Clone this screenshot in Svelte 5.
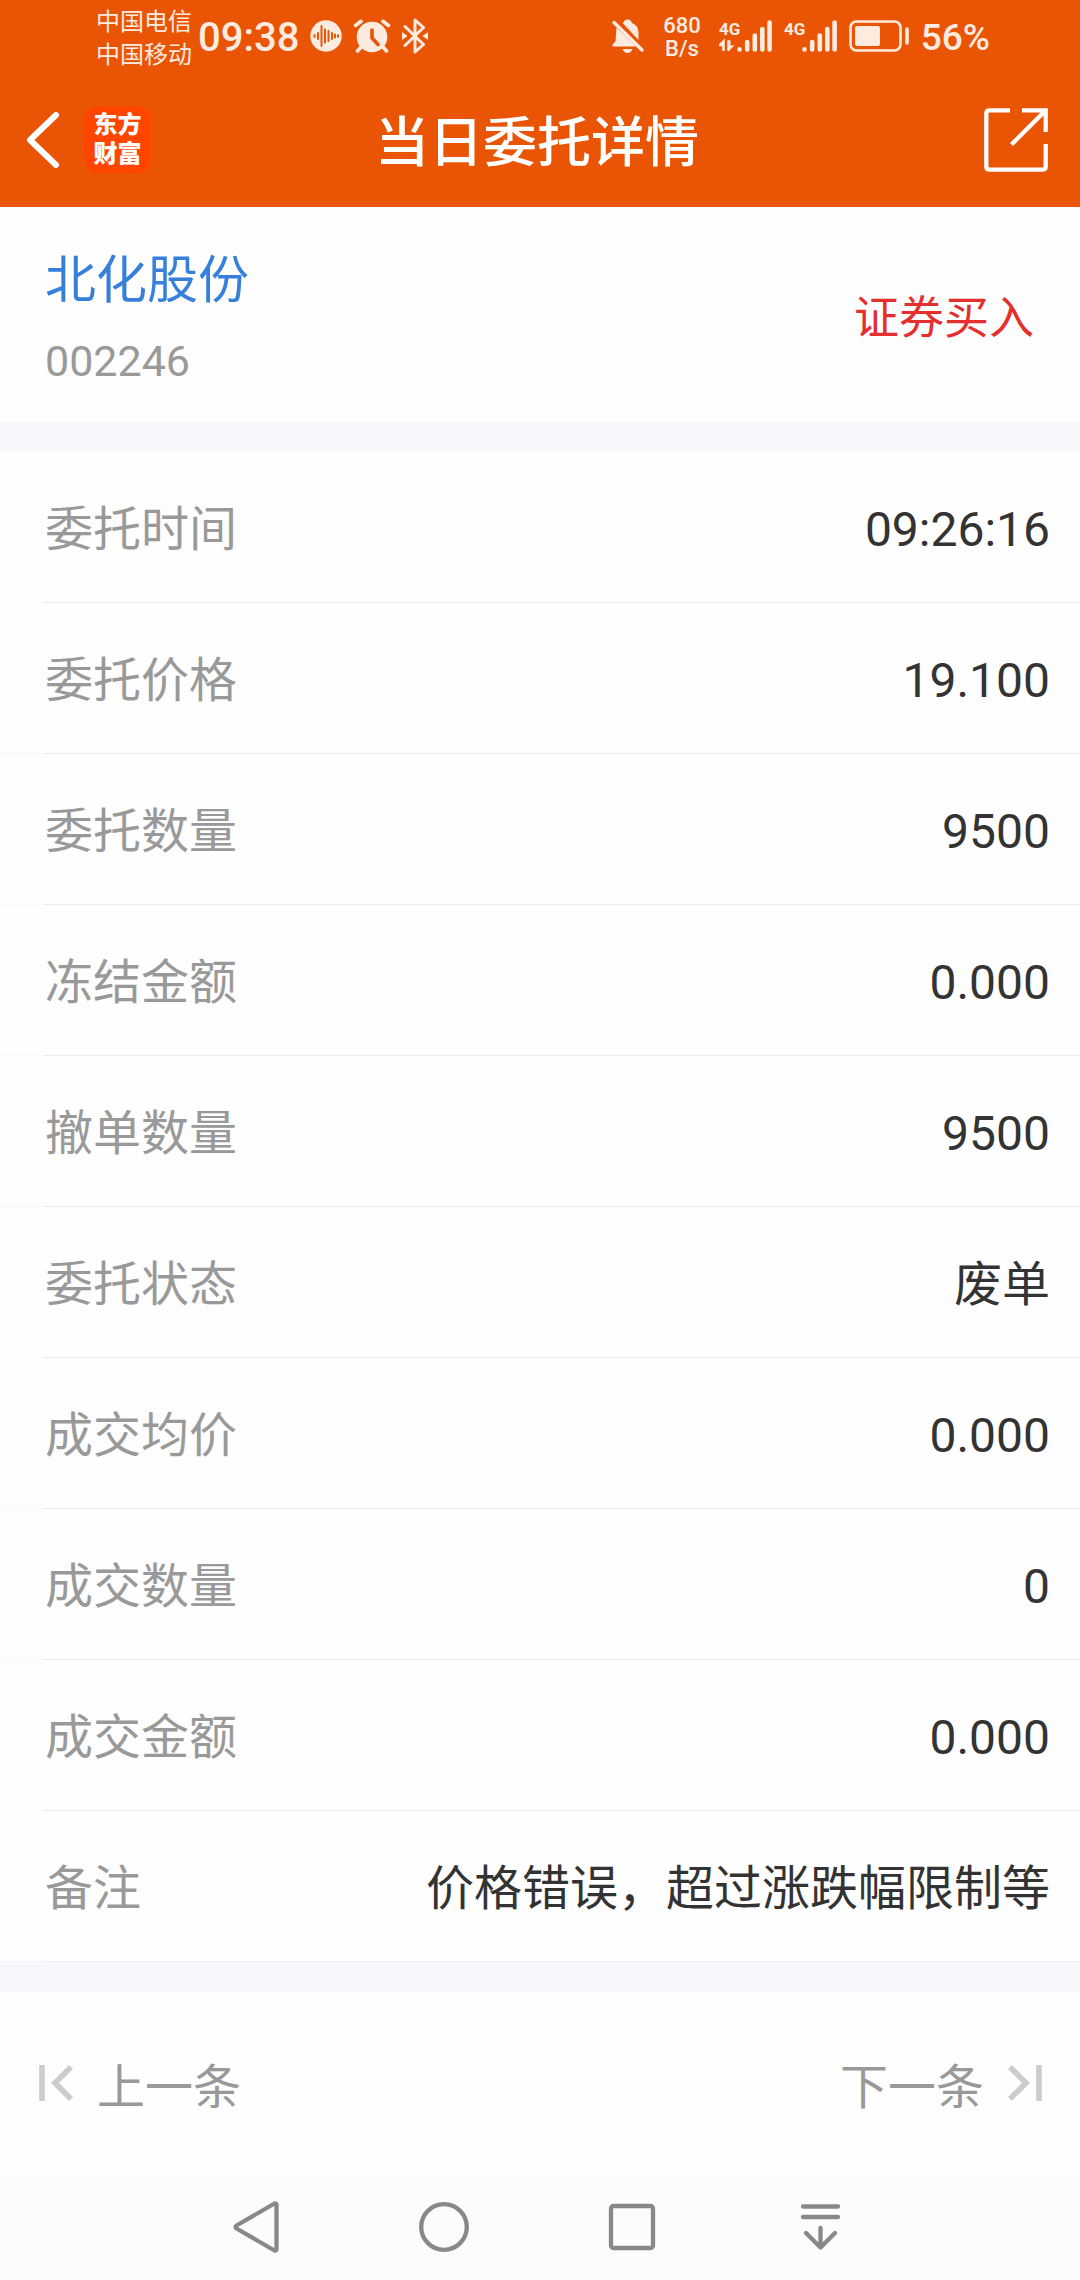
<script lang="ts">
  const rows = [
    { label: '委托时间', value: '09:26:16' },
    { label: '委托价格', value: '19.100' },
    { label: '委托数量', value: '9500' },
    { label: '冻结金额', value: '0.000' },
    { label: '撤单数量', value: '9500' },
    { label: '委托状态', value: '废单' },
    { label: '成交均价', value: '0.000' },
    { label: '成交数量', value: '0' },
    { label: '成交金额', value: '0.000' },
    { label: '备注', value: '价格错误，超过涨跌幅限制等' },
  ];
</script>

{#snippet signal(data: boolean)}
  <svg width="53" height="36" viewBox="0 0 53 36" aria-hidden="true">
    <text class="net-type" x="0" y="17">4G</text>
    {#if data}
      <path d="M4.500 33V23.500L1 27H4.500M9.500 22.500V33" fill="none" stroke="currentColor" stroke-width="2.500" />
      <path d="M9 22.500v11l6.500-6h-4v-5z" fill="currentColor" />
    {/if}
    <g stroke="currentColor" stroke-width="4.600" stroke-linecap="round">
      <path d="M20.500 31.200v.300M28.200 24v7.500M35.800 17.500v14M43.300 11v20.500M50.600 4.500v27" />
    </g>
  </svg>
{/snippet}

<div class="page">
  <header class="top">
    <div class="status">
      <div class="carriers"><span>中国电信</span><span>中国移动</span></div>
      <span class="clock">09:38</span>
      <svg width="32" height="32" viewBox="0 0 32 32" aria-hidden="true">
        <circle cx="16" cy="16" r="15.700" fill="currentColor" />
        <path class="cut" d="M4.500 15v2M8 13v6M11.500 6v20M15 9.500v13M18.500 11v10M22 13v6M25 14.500v3M28 15.200v1.600" />
      </svg>
      <svg width="38" height="34" viewBox="0 0 38 34" aria-hidden="true">
        <circle cx="19" cy="18" r="15.300" fill="currentColor" />
        <path d="M2.500 6.500L8 2.300M35.500 6.500L30 2.300M8 28l-3.500 4M30 28l3.500 4" fill="none" stroke="currentColor" stroke-width="3.600" stroke-linecap="round" />
        <path d="M19 11v8l6 6.500" fill="none" class="hand" />
      </svg>
      <svg width="26" height="36" viewBox="1 0 26 36" aria-hidden="true">
        <path d="M4 8.500L22.500 26.500L14 34V2L22.500 9.500L4 27.500" fill="none" stroke="currentColor" stroke-width="3" stroke-linejoin="round" stroke-linecap="round" />
        <path d="M1 14l5.500 4L1 22zM27 14l-5.500 4 5.500 4z" fill="currentColor" />
      </svg>

      <div class="right">
        <svg width="34" height="36" viewBox="0 0 34 36" aria-hidden="true">
          <path d="M12 5.500Q13 1.500 16.500 1.500T21 5q6 2.500 6.500 9v8zM5.500 9.500L25 28.500H1.500V26.500L4.500 23.500zM11.500 31h10q-1.500 4-5 4t-5-4z" fill="currentColor" />
          <path d="M3 4.500L31 32" stroke="currentColor" stroke-width="3.400" stroke-linecap="round" />
        </svg>
        <div class="speed"><span>680</span><span>B/s</span></div>
        {@render signal(true)}
        {@render signal(false)}
        <svg width="60" height="34" viewBox="0 0 60 34" aria-hidden="true">
          <rect x="1.500" y="2.500" width="50" height="29" rx="6" fill="none" stroke="currentColor" stroke-width="2.600" />
          <rect x="6" y="7" width="25" height="20" rx="2" fill="currentColor" />
          <path d="M58 10v14" stroke="currentColor" stroke-width="3.600" stroke-linecap="round" />
        </svg>
        <span class="percent">56%</span>
      </div>
    </div>

    <div class="titlebar">
      <div class="start">
        <button aria-label="返回">
          <svg width="34" height="56" viewBox="0 0 34 56"><path d="M30 3L4 28L30 53" fill="none" stroke="currentColor" stroke-width="6" stroke-linecap="round" stroke-linejoin="round" /></svg>
        </button>
        <div class="logo"><span>东方</span><span>财富</span></div>
      </div>
      <h1>当日委托详情</h1>
      <button class="share" aria-label="分享">
        <svg width="64" height="64" viewBox="0 0 64 64"><path d="M26 2.300H5.500Q2.300 2.300 2.300 5.500V58.500Q2.300 61.700 5.500 61.700H58.500Q61.700 61.700 61.700 58.500V36M38 2.300H61.700V24M61 3L27.500 36.500" fill="none" stroke="currentColor" stroke-width="4.300" /></svg>
      </button>
    </div>
  </header>

  <main>
    <section class="summary">
      <div class="stock">
        <a class="name" href="#stock">北化股份</a>
        <span class="code">002246</span>
      </div>
      <span class="side">证券买入</span>
    </section>

    <dl class="rows">
      {#each rows as row}
        <div class="row">
          <dt>{row.label}</dt>
          <dd>{row.value}</dd>
        </div>
      {/each}
    </dl>

    <div class="pager">
      <button>
        <svg width="34" height="36" viewBox="0 0 34 36" aria-hidden="true"><path d="M3 0v36M32 2L16 18L32 34" fill="none" stroke="currentColor" stroke-width="5.600" /></svg>
        <span>上一条</span>
      </button>
      <button>
        <span>下一条</span>
        <svg width="34" height="36" viewBox="0 0 34 36" aria-hidden="true"><path d="M31 0v36M2 2L18 18L2 34" fill="none" stroke="currentColor" stroke-width="5.600" /></svg>
      </button>
    </div>
  </main>

  <nav class="system">
    <button aria-label="后退">
      <svg width="52" height="52" viewBox="0 0 52 52"><path d="M46.500 3.500V48.500Q46 50 44.500 49.500L6.500 27.500Q4.500 26 6.500 24.500L44.500 2.500Q46 2 46.500 3.500Z" /></svg>
    </button>
    <button aria-label="主页">
      <svg width="52" height="52" viewBox="0 0 52 52"><circle cx="26" cy="26" r="22.800" /></svg>
    </button>
    <button aria-label="最近任务">
      <svg width="52" height="52" viewBox="0 0 52 52"><rect x="5" y="5" width="42" height="42" rx="2.500" /></svg>
    </button>
    <button aria-label="下拉通知">
      <svg width="52" height="52" viewBox="0 0 52 52"><path d="M9 5.500H44M9 16H44M26.500 27V46.500M12 32L26.500 46.500L41 32" /></svg>
    </button>
  </nav>
</div>

<style>
  :global(body) {
    background: #fefefe;
  }
  .page {
    display: flex;
    flex-direction: column;
    min-height: 100vh;
    background: #fefefe;
    color: #333;
    font-family: Roboto, 'Noto Sans CJK SC', sans-serif;
    font-size: 48px;
  }
  svg {
    display: block;
    flex: none;
  }
  button {
    border: 0;
    padding: 0;
    background: none;
    color: inherit;
    font: inherit;
    cursor: pointer;
  }
  .top {
    background: #e95504;
    color: #fff;
  }
  .status {
    display: flex;
    align-items: center;
    gap: 11px;
    height: 72px;
    padding: 0 90px 0 96px;
    color: #fdebe0;
  }
  .carriers,
  .speed,
  .logo {
    display: flex;
    flex-direction: column;
  }
  .carriers {
    margin-right: -5px;
    padding-top: 5px;
    font-size: 24px;
    line-height: 33px;
  }
  .clock {
    padding-top: 3px;
    font-size: 40px;
    font-weight: 500;
  }
  .cut {
    fill: none;
    stroke: #e95504;
    stroke-width: 2;
    stroke-linecap: round;
  }
  .hand {
    stroke: #e95504;
    stroke-width: 3.6;
    stroke-linecap: round;
  }
  .right {
    display: flex;
    align-items: center;
    gap: 12px;
    margin-left: auto;
  }
  .speed {
    align-items: center;
    margin: 0 6px;
    padding-top: 2px;
    font-size: 22px;
    font-weight: 500;
    line-height: 23px;
  }
  .net-type {
    fill: currentColor;
    font: bold 17px Roboto, sans-serif;
  }
  .percent {
    padding-top: 3px;
    font-size: 37px;
    font-weight: 500;
  }
  .titlebar {
    display: grid;
    grid-template-columns: 1fr auto 1fr;
    align-items: center;
    height: 135px;
    padding: 0 32px 0 26px;
  }
  .start {
    display: flex;
    align-items: center;
    gap: 24px;
  }
  .logo {
    align-items: center;
    justify-content: center;
    width: 67px;
    height: 67px;
    border-radius: 14px;
    background: #ff4500;
    font-size: 24px;
    font-weight: 900;
    line-height: 29px;
  }
  h1 {
    margin: 0;
    padding-top: 9px;
    font-size: 54px;
    font-weight: 500;
    line-height: 80px;
  }
  .share {
    justify-self: end;
  }
  .summary {
    display: flex;
    align-items: center;
    justify-content: space-between;
    height: 215px;
    padding: 0 46px 0 45px;
  }
  .stock {
    display: flex;
    flex-direction: column;
    padding-top: 2px;
  }
  .name {
    color: #3680dc;
    font-size: 51px;
    line-height: 90px;
    text-decoration: none;
  }
  .code {
    color: #999;
    font-size: 43px;
    line-height: 70px;
  }
  .side {
    color: #e52e2e;
    font-size: 45px;
  }
  .rows {
    margin: 0;
    border: solid #f7f8fb;
    border-width: 30px 0;
  }
  .row {
    display: flex;
    align-items: center;
    justify-content: space-between;
    gap: 32px;
    box-sizing: border-box;
    min-height: 151px;
    padding: 6px 30px 0 45px;
    border-bottom: 1px solid;
    border-image: linear-gradient(to right, #f8f8f8 45px, #ebebeb 45px) 1;
    line-height: 70px;
  }
  dt {
    color: #999;
  }
  dd {
    margin: 0;
    text-align: right;
  }
  .pager {
    display: flex;
    align-items: center;
    justify-content: space-between;
    height: 182px;
    padding: 0 38px 0 39px;
    color: #ccc;
  }
  .pager button {
    display: flex;
    align-items: center;
    gap: 24px;
  }
  .pager span {
    color: #999;
  }
  .system {
    display: flex;
    flex: 1;
    align-items: center;
    justify-content: space-around;
    min-height: 106px;
    padding: 0 166px 0 162px;
    background: #fcfcfc;
  }
  .system svg {
    fill: none;
    stroke: #888;
    stroke-width: 4.3;
    stroke-linecap: round;
    stroke-linejoin: round;
  }
</style>
